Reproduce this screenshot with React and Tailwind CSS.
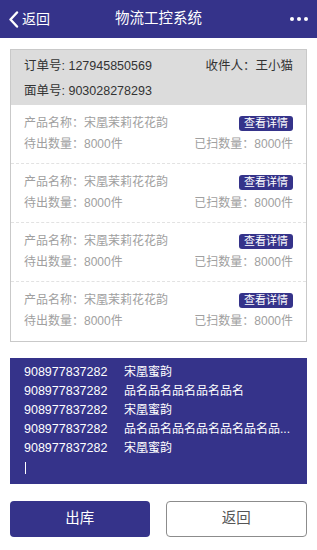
import React from 'react';

const products = [1, 2, 3, 4].map((id) => ({
  id,
  name: '宋凰茉莉花花韵',
  pending: '8000件',
  scanned: '8000件',
}));

const scans = [
  { code: '908977837282', name: '宋凰蜜韵' },
  { code: '908977837282', name: '品名品名品名品名品名' },
  { code: '908977837282', name: '宋凰蜜韵' },
  { code: '908977837282', name: '品名品名品名品名品名品名品...' },
  { code: '908977837282', name: '宋凰蜜韵' },
];

const font = { fontFamily: '"Liberation Sans", "Noto Sans CJK SC", sans-serif' };

const App = () => {
  return (
    <div className="w-[317px] h-[550px] bg-white flex flex-col" style={font}>
      {/* header */}
      <div className="h-[38px] bg-[#35338a] flex items-center px-[8px] text-white">
        <div className="flex items-center w-[80px]">
          <svg width="11" height="17" viewBox="0 0 11 17" className="mr-[3px]">
            <path d="M9 1.5 L2.5 8.5 L9 15.5" fill="none" stroke="white" strokeWidth="2.4" strokeLinecap="round" strokeLinejoin="round" />
          </svg>
          <span className="text-[14px]">返回</span>
        </div>
        <div className="flex-1 text-center text-[14.5px]">物流工控系统</div>
        <div className="w-[80px] flex justify-end gap-[3px] pr-[1px]">
          <span className="w-[4px] h-[4px] rounded-full bg-white" />
          <span className="w-[4px] h-[4px] rounded-full bg-white" />
          <span className="w-[4px] h-[4px] rounded-full bg-white" />
        </div>
      </div>

      {/* order card */}
      <div className="mx-[10px] mt-[11px] border border-[#c9c9c9]">
        <div className="h-[55px] bg-[#dcdcdc] px-[13px] pt-[6px] text-[12.5px] text-[#333]">
          <div className="h-[20px] leading-[20px] flex justify-between">
            <span>订单号: 127945850569</span>
            <span>收件人：王小猫</span>
          </div>
          <div className="h-[20px] leading-[20px] mt-[5px]">面单号: 903028278293</div>
        </div>
        <div className="divide-y divide-dashed divide-[#e2e2e2]">
          {products.map((p) => (
            <div key={p.id} className="h-[59px] px-[13px] pt-[8px] text-[12px] text-[#a0a0a0]">
              <div className="h-[20px] leading-[20px] flex justify-between items-center">
                <span>产品名称：{p.name}</span>
                <span className="h-[15px] px-[5px] rounded-[3px] bg-[#35338a] text-white text-[11px] leading-[15px]">
                  查看详情
                </span>
              </div>
              <div className="h-[20px] leading-[20px] mt-[1px] flex justify-between">
                <span>待出数量：{p.pending}</span>
                <span>已扫数量：{p.scanned}</span>
              </div>
            </div>
          ))}
        </div>
      </div>

      {/* scan list */}
      <div className="mx-[10px] mt-[16px] h-[126px] bg-[#35338a] px-[14px] pt-[5px] text-white text-[12px]">
        {scans.map((s, i) => (
          <div key={i} className="flex h-[19px] leading-[19px]">
            <span className="w-[100px] shrink-0 text-[12.5px]">{s.code}</span>
            <span className="whitespace-nowrap">{s.name}</span>
          </div>
        ))}
        <div className="h-[19px] flex items-center pl-[1px]">
          <span className="w-px h-[12px] bg-white" />
        </div>
      </div>

      {/* actions */}
      <div className="mx-[10px] mt-[17px] flex gap-[16px]">
        <button className="flex-1 h-[36px] rounded-[4px] bg-[#35338a] text-white text-[14.5px]">出库</button>
        <button className="flex-1 h-[36px] rounded-[4px] bg-white border border-[#8c8c8c] text-[#555] text-[14.5px]">
          返回
        </button>
      </div>
    </div>
  );
};

export default App;
